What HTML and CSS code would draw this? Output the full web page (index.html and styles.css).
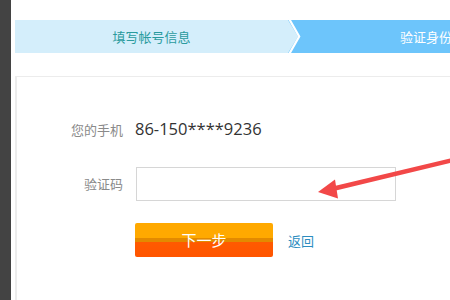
FILE: index.html
```html
<!DOCTYPE html>
<html lang="zh-CN">
<head>
<meta charset="utf-8">
<title>验证身份</title>
<link rel="stylesheet" href="styles.css">
</head>
<body>
<div class="page">
  <div class="sidebar"></div>
  <div class="main">
    <div class="steps">
      <div class="step step-done">填写帐号信息</div>
      <svg class="chev" width="14" height="33" viewBox="0 0 14 33">
        <rect x="0" y="0" width="14" height="33" fill="#6dc5fb"/>
        <polygon points="0,0 10,16.5 0,33" fill="#d4eefb"/>
        <polyline points="1.2,-1 11.2,16.5 1.2,34" fill="none" stroke="#ffffff" stroke-width="2.2"/>
      </svg>
      <div class="step step-active">验证身份</div>
    </div>
    <div class="card">
      <div class="form">
        <div class="label">您的手机</div>
        <div class="value phone">86-150****9236</div>
        <div class="label">验证码</div>
        <div class="value"><input class="code" type="text"></div>
        <div class="label"></div>
        <div class="value actions">
          <button class="btn-next" type="button">下一步</button>
          <a class="back" href="#">返回</a>
        </div>
      </div>
    </div>
  </div>
  <svg class="annot" width="450" height="300" viewBox="0 0 450 300">
    <polygon points="455,157.2 455,161.8 336,190.5 334.5,186" fill="#f24848"/>
    <polygon points="318,192 335,179.5 338,198.5" fill="#f24848"/>
  </svg>
</div>
</body>
</html>
```
FILE: styles.css
```css
html, body {
  margin: 0;
  padding: 0;
  background: #ffffff;
  overflow: hidden;
}
.page {
  position: relative;
  width: 450px;
  height: 300px;
  overflow: hidden;
  display: flex;
  font-family: "Noto Sans CJK SC", "Open Sans", sans-serif;
}
.sidebar {
  width: 11px;
  flex: none;
  background: #434343;
}
.main {
  flex: none;
  width: 600px;
  padding-left: 4px;
  padding-top: 20px;
}
.steps {
  display: flex;
  height: 33px;
}
.step {
  height: 33px;
  line-height: 33px;
  font-size: 13px;
}
.step-done {
  width: 273px;
  background: #d4eefb;
  color: #2a9b9e;
  text-align: center;
}
.chev {
  display: block;
  flex: none;
}
.step-active {
  flex: 1;
  background: #6dc5fb;
  color: #ffffff;
  padding-left: 98px;
}
.card {
  margin-top: 23px;
  border-left: 2px solid #ececec;
  border-top: 1px solid #ececec;
  height: 300px;
  padding-top: 36px;
}
.form {
  display: grid;
  grid-template-columns: 106px 400px;
  grid-template-rows: 33px 33px 34px;
  column-gap: 13px;
  row-gap: 21px;
  align-items: center;
}
.form > .label:nth-of-type(5) {
  display: block;
}
.form .actions {
  margin-top: 4px;
}
.label {
  text-align: right;
  font-size: 13px;
  color: #8a8a8a;
}
.phone {
  font-family: "Open Sans", "Noto Sans CJK SC", sans-serif;
  font-size: 16.5px;
  color: #333333;
  margin-left: -1px;
  position: relative;
  top: -1px;
}
.code {
  display: block;
  box-sizing: border-box;
  width: 260px;
  height: 34px;
  margin: 0;
  border: 1px solid #d6d6d6;
  background: #ffffff;
}
.actions {
  display: flex;
  align-items: center;
  gap: 15px;
  margin-left: -1px;
}
.btn-next {
  width: 138px;
  height: 34px;
  border: none;
  border-radius: 2px;
  padding: 0;
  background: linear-gradient(to bottom, #ffa900 0, #ffa900 44%, #e38a00 44%, #e38a00 56%, #ff5a00 56%, #ff5500 100%);
  color: #ffffff;
  font-family: "Noto Sans CJK SC", sans-serif;
  font-size: 15px;
  line-height: 34px;
}
.back {
  color: #2d8dbf;
  font-size: 13px;
  text-decoration: none;
}
.annot {
  position: absolute;
  left: 0;
  top: 0;
  pointer-events: none;
}
```
